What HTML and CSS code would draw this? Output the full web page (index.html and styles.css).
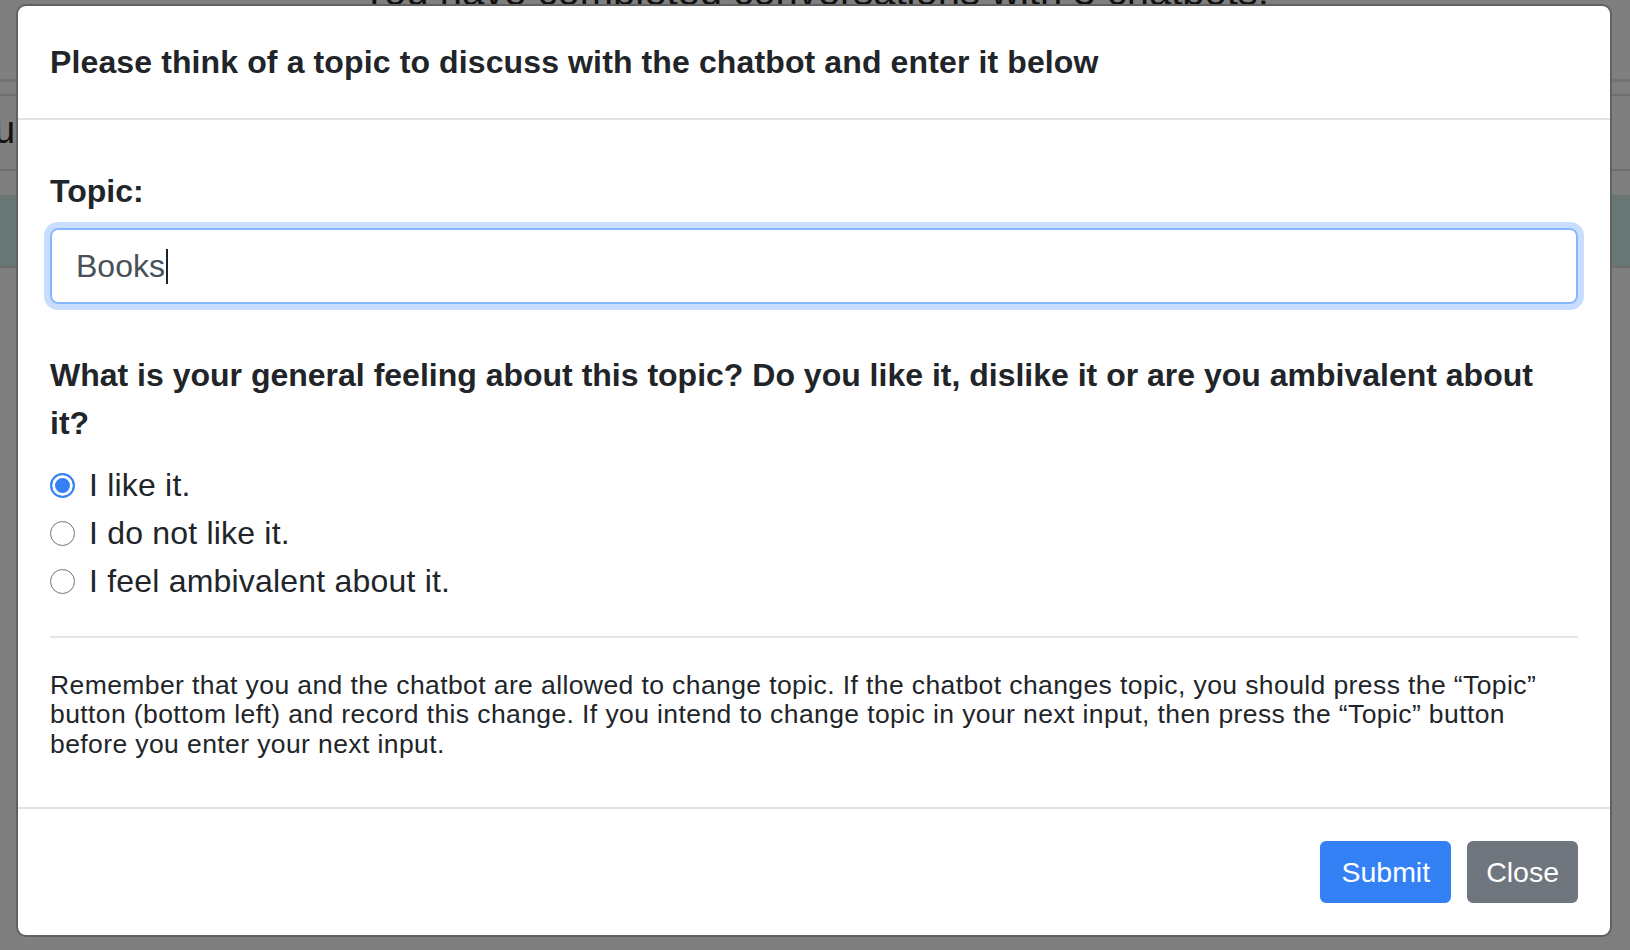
FILE: index.html
```html
<!DOCTYPE html>
<html lang="en">
<head>
  <meta charset="UTF-8">
  <meta name="viewport" content="width=device-width, initial-scale=1.0">
  <title>Chatbot Study</title>
  <link rel="stylesheet" href="styles.css">
</head>
<body>
  <div class="page">
    <h2 class="page-title">You have completed conversations with 3 chatbots.</h2>
    <div class="page-rule rule-top"></div>
    <div class="page-rule rule-second"></div>
    <div class="page-row"><span class="page-word">u</span></div>
    <div class="page-rule"></div>
    <div class="page-band"></div>
    <div class="page-rule"></div>
  </div>

  <div class="modal">
    <div class="modal-header">
      <h5 class="modal-title">Please think of a topic to discuss with the chatbot and enter it below</h5>
    </div>
    <div class="modal-body">
      <label class="form-label" for="topic">Topic:</label>
      <div id="topic" class="form-control focused">Books<span class="caret"></span></div>

      <p class="question">What is your general feeling about this topic? Do you like it, dislike it or are you ambivalent about it?</p>
      <div class="choices">
        <label class="choice"><input type="radio" name="feeling" value="like" checked> I like it.</label>
        <label class="choice"><input type="radio" name="feeling" value="dislike"> I do not like it.</label>
        <label class="choice"><input type="radio" name="feeling" value="ambivalent"> I feel ambivalent about it.</label>
      </div>

      <hr class="divider">

      <p class="note">Remember that you and the chatbot are allowed to change topic. If the chatbot changes topic, you should press the “Topic” button (bottom left) and record this change. If you intend to change topic in your next input, then press the “Topic” button before you enter your next input.</p>
    </div>
    <div class="modal-footer">
      <button class="btn btn-primary">Submit</button>
      <button class="btn btn-secondary">Close</button>
    </div>
  </div>
</body>
</html>
```

FILE: styles.css
```css
*, *::before, *::after {
  box-sizing: border-box;
}

html, body {
  margin: 0;
  height: 100%;
  overflow: hidden;
}

body {
  font-family: "Liberation Sans", Arial, sans-serif;
  color: #212529;
  background: #7f7f7f;
}

/* page behind the backdrop, already darkened */
.page-title {
  margin: -33px 0 0;
  font-size: 40px;
  font-weight: normal;
  line-height: 48px;
  text-align: center;
  color: #111;
}

.page-rule {
  height: 2px;
  background: #6e6e6e;
}

.rule-top {
  height: 3px;
  margin-top: 64px;
  background: #727272;
}

.rule-second {
  margin-top: 12px;
}

.page-row {
  height: 73px;
  padding-top: 10px;
  font-size: 38px;
  line-height: 48px;
  color: #111;
}

.page-word {
  margin-left: -6px;
}

.page-band {
  height: 71px;
  margin-top: 24px;
  background: #687674;
}

/* modal */
.modal {
  position: absolute;
  top: 4px;
  left: 16px;
  width: 1596px;
  background: #fff;
  border: 2px solid #616161;
  border-radius: 10px;
}

.modal-header {
  padding: 32px;
  border-bottom: 2px solid #dee2e6;
}

.modal-title {
  margin: 0;
  font-size: 32px;
  line-height: 48px;
  font-weight: bold;
  letter-spacing: 0.12px;
}

.modal-body {
  padding: 47px 32px 32px;
}

.form-label {
  display: block;
  font-size: 32px;
  line-height: 48px;
  font-weight: bold;
  margin-bottom: 13px;
}

.form-control {
  height: 76px;
  padding: 12px 24px;
  font-size: 32px;
  line-height: 48px;
  color: #495057;
  border: 2px solid #e0e3e6;
  border-radius: 8px;
}

.form-control.focused {
  border-color: #86b7fe;
  box-shadow: 0 0 0 6px #c9deff;
}

.caret {
  display: inline-block;
  width: 2px;
  height: 35px;
  margin-left: 1px;
  vertical-align: -7px;
  background: #222;
}

.question {
  margin: 47px 0 14px;
  font-size: 32px;
  line-height: 48px;
  font-weight: bold;
}

.choice {
  display: flex;
  align-items: center;
  gap: 14px;
  font-size: 32px;
  line-height: 48px;
  letter-spacing: 0.2px;
}

.choice input {
  appearance: none;
  flex: none;
  width: 25px;
  height: 25px;
  margin: 0;
  border: 1.5px solid #767676;
  border-radius: 50%;
  background: #fff;
}

.choice input:checked {
  border: 2px solid #3381f5;
  background: #3381f5;
  box-shadow: inset 0 0 0 3px #fff;
}

.divider {
  margin: 31px 0 33px;
  border: 0;
  border-top: 2px solid #e4e6e9;
}

.note {
  margin: 0 0 16px;
  font-size: 26.5px;
  line-height: 29.4px;
  letter-spacing: 0.4px;
}

.modal-footer {
  display: flex;
  justify-content: flex-end;
  padding: 24px;
  border-top: 2px solid #dee2e6;
}

.btn {
  margin: 8px;
  padding: 8px 17px;
  font-family: inherit;
  font-size: 28.5px;
  line-height: 42px;
  color: #fff;
  border: 2px solid transparent;
  border-radius: 6px;
}

.btn-primary {
  padding: 8px 19px;
  background: #3381f5;
  border-color: #3381f5;
}

.btn-secondary {
  background: #70767d;
  border-color: #70767d;
}
```
